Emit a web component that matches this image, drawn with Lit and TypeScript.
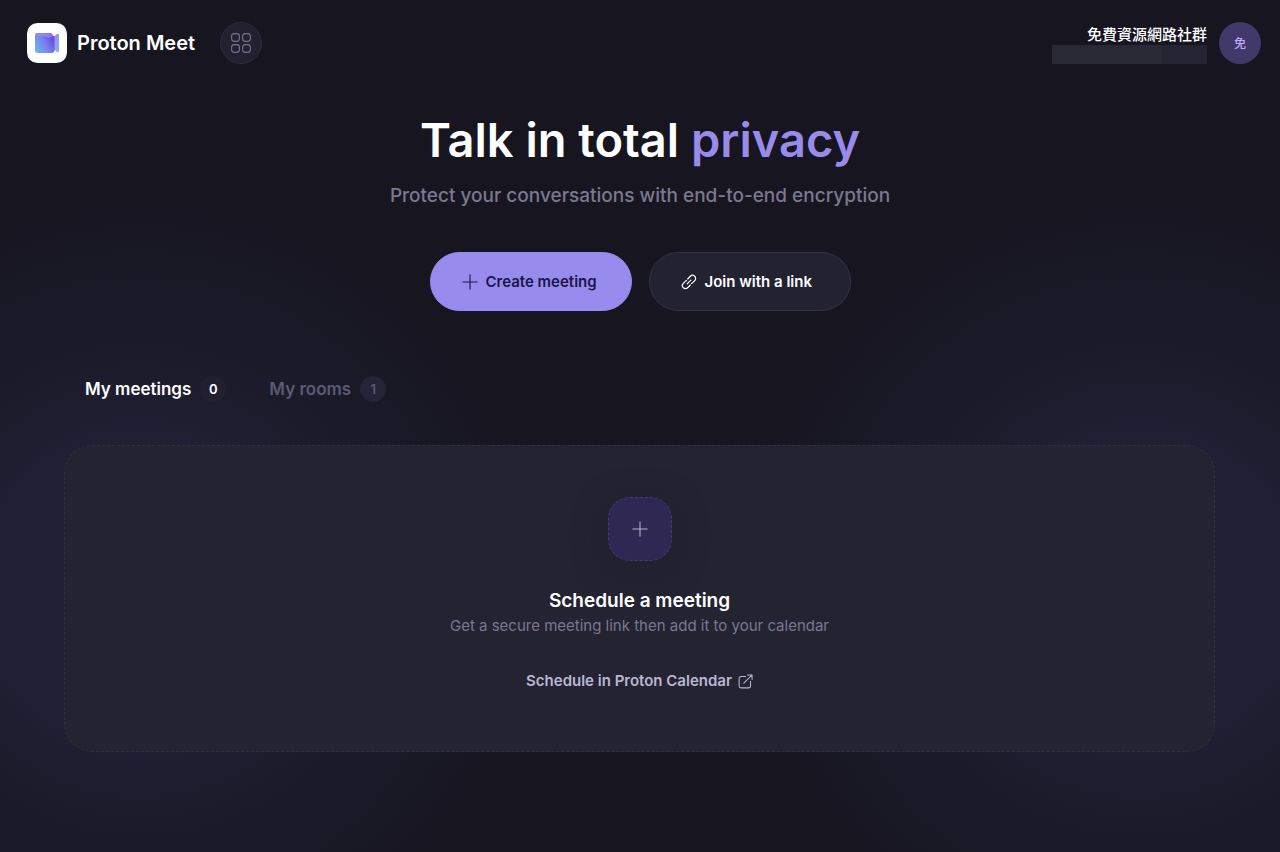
import { LitElement, html, css, svg } from "lit";
import { customElement, state } from "lit/decorators.js";

const plusIcon = svg`
  <svg class="icon" viewBox="0 0 16 16" width="16" height="16" aria-hidden="true">
    <path d="M8 .8v14.400M.8 8h14.400" fill="none" stroke="currentColor" stroke-width="1.100" stroke-linecap="round" />
  </svg>`;

const linkIcon = svg`
  <svg class="icon" viewBox="0 0 16 16" width="16" height="16" aria-hidden="true">
    <g fill="none" stroke="currentColor" stroke-width="1.200" stroke-linecap="round" transform="rotate(-45 8 8)">
      <path d="M9.200 4.900H13a3.100 3.100 0 0 1 0 6.200H9.800a3 3 0 0 1-1.200-.3" />
      <path d="M6.800 11.100H3a3.100 3.100 0 0 1 0-6.200h3.200a3 3 0 0 1 1.200.3" />
      <path d="M5.400 8h5.200" />
    </g>
  </svg>`;

const externalIcon = svg`
  <svg class="icon" viewBox="0 0 16 16" width="15" height="15" aria-hidden="true">
    <g fill="none" stroke="currentColor" stroke-width="1.100" stroke-linecap="round" stroke-linejoin="round">
      <path d="M8.200 2.600H3.400A2.200 2.200 0 0 0 1.200 4.800v7.800a2.200 2.200 0 0 0 2.200 2.200h7.800a2.200 2.200 0 0 0 2.200-2.200V7.800" />
      <path d="M10.200 1H15v4.800M15 1 6.200 9.800" />
    </g>
  </svg>`;

const appsIcon = svg`
  <svg class="icon" viewBox="0 0 20 20" width="20" height="20" aria-hidden="true">
    <g fill="none" stroke="currentColor" stroke-width="1.100">
      <rect x=".6" y=".6" width="7.800" height="7.800" rx="2.800" />
      <rect x="11.600" y=".6" width="7.800" height="7.800" rx="2.800" />
      <rect x=".6" y="11.600" width="7.800" height="7.800" rx="2.800" />
      <rect x="11.600" y="11.600" width="7.800" height="7.800" rx="2.800" />
    </g>
  </svg>`;

const logo = svg`
  <svg class="logo" viewBox="0 0 40 40" width="40" height="40" aria-hidden="true">
    <defs>
      <linearGradient id="body" x1="0" y1=".9" x2="1" y2=".3">
        <stop offset="0" stop-color="#6cb4ec" />
        <stop offset=".5" stop-color="#7a86ea" />
        <stop offset="1" stop-color="#6a45e4" />
      </linearGradient>
      <linearGradient id="lens" x1="0" y1="0" x2="0" y2="1">
        <stop offset="0" stop-color="#a08ee8" />
        <stop offset="1" stop-color="#86b4ec" />
      </linearGradient>
    </defs>
    <rect width="40" height="40" rx="10.500" fill="#fff" />
    <path d="M24 15.500 30 11q2-1 2 1.200v15.600q0 2.200-2 1.200l-6-4.500z" fill="url(#lens)" />
    <path d="M10 10h13q2.500 0 3 2.500l1.500 1.500v13q0 3-3 3H11q-3 0-3-3V12q0-2 2-2z" fill="url(#body)" />
    <path d="M8 13v-1q0-2 2-2h13q2.500 0 3 2.500v.5l-5 2-2-1.500H8z" fill="#9a93ea" opacity=".7" />
  </svg>`;

@customElement("app-root")
export class AppRoot extends LitElement {
  static styles = css`
    :host {
      display: block;
      min-height: 100vh;
      box-sizing: border-box;
      color: #fff;
      font-family: Inter, "Noto Sans CJK TC", sans-serif;
      background:
        radial-gradient(circle 400px at 11% 590px, #22233a 0, #201f33 38%, #1b1a29 65%, #16152000 100%),
        radial-gradient(circle 400px at 89% 590px, #22233a 0, #201f33 38%, #1b1a29 65%, #16152000 100%),
        #161520;
    }
    * { box-sizing: border-box; }
    button { font: inherit; color: inherit; border: 0; background: none; padding: 0; cursor: pointer; }
    h1, h2, p { margin: 0; }
    .icon, .logo { display: block; flex: none; }

    .header { display: flex; align-items: center; justify-content: space-between; padding: 22px 19px 22px 27px; }
    .start, .user, .brand { display: flex; align-items: center; }
    .start { gap: 25px; }
    .brand { gap: 10px; color: #fff; text-decoration: none; font-size: 20px; line-height: 24px; font-weight: 600; }
    .apps {
      display: grid; place-items: center; width: 42px; height: 42px; border-radius: 50%;
      background: #232130; border: 1px solid #2c2b3c; color: #77738c;
    }
    .user { gap: 12px; }
    .identity { display: flex; flex-direction: column; align-items: flex-end; padding-top: 2px; }
    .name { font-size: 15px; line-height: 20px; font-weight: 500; }
    .address { display: flex; width: 155px; height: 19px; background: #252432; }
    .address::before { content: ""; width: 70%; background: #292936; }
    .avatar {
      width: 42px; height: 42px; border-radius: 50%; background: #413968; color: #bfa9ff;
      font-family: "Noto Sans CJK TC", sans-serif; font-size: 12px; line-height: 16px; font-weight: 500;
    }

    .hero { display: flex; flex-direction: column; align-items: center; padding: 26px 24px 0; text-align: center; }
    .title { font-size: 47px; line-height: 56px; font-weight: 600; }
    .accent { color: #988be9; }
    .tagline { margin-top: 14px; font-size: 19px; line-height: 28px; font-weight: 500; color: #7b7890; }
    .actions { display: flex; flex-wrap: wrap; justify-content: center; gap: 17px; margin-top: 42px; }
    .action {
      display: flex; align-items: center; gap: 8px; min-width: 202px; height: 59px; padding: 0 31px;
      border: 1px solid #353446; border-radius: 30px; font-size: 15px; line-height: 20px; font-weight: 600;
    }
    .primary { background: #988bee; border-color: #988bee; color: #1d1646; }
    .secondary { background: #232231; }

    .content { padding: 65px 65px 24px 64px; }
    .tabs { display: flex; gap: 43px; padding-left: 21px; }
    .tab { display: flex; align-items: center; gap: 9px; font-size: 17px; line-height: 24px; font-weight: 600; color: #5c5973; }
    .count {
      display: grid; place-items: center; width: 26px; height: 26px; border-radius: 50%;
      background: #252337; font-size: 13px; line-height: 16px;
    }
    .selected { color: #fff; }
    .selected .count { background: #212031; }

    .panel {
      display: flex; flex-direction: column; align-items: center; margin-top: 43px; padding: 51px 24px 60px;
      border: 1px dashed #302f40; border-radius: 28px; background: #242332; text-align: center;
    }
    .add {
      display: grid; place-items: center; width: 64px; height: 64px; border-radius: 22px;
      border: 1px dashed #443d66; background: #2e2852; color: #b5b0c8; box-shadow: 0 8px 32px #1e1d2a80;
    }
    .heading { margin-top: 26px; font-size: 19px; line-height: 28px; font-weight: 600; }
    .hint { font-size: 15px; line-height: 22px; color: #7b7791; }
    .calendar {
      display: flex; align-items: center; gap: 6px; margin-top: 34px; font-size: 15px; line-height: 20px;
      font-weight: 600; color: #bab6d2; text-decoration: none;
    }
  `;

  @state() private tab = 0;

  private tabs = [
    { label: "My meetings", count: 0 },
    { label: "My rooms", count: 1 },
  ];

  render() {
    return html`
      <header class="header">
        <div class="start">
          <a class="brand" href="#">${logo}<span>Proton Meet</span></a>
          <button class="apps" aria-label="Proton apps">${appsIcon}</button>
        </div>
        <div class="user">
          <div class="identity">
            <span class="name">免費資源網路社群</span>
            <span class="address"></span>
          </div>
          <button class="avatar">免</button>
        </div>
      </header>
      <main>
        <section class="hero">
          <h1 class="title">Talk in total <span class="accent">privacy</span></h1>
          <p class="tagline">Protect your conversations with end-to-end encryption</p>
          <div class="actions">
            <button class="action primary">${plusIcon}<span>Create meeting</span></button>
            <button class="action secondary">${linkIcon}<span>Join with a link</span></button>
          </div>
        </section>
        <section class="content">
          <div class="tabs" role="tablist">
            ${this.tabs.map(
              (t, i) => html`
                <button
                  class="tab ${i === this.tab ? "selected" : ""}"
                  role="tab"
                  aria-selected=${i === this.tab ? "true" : "false"}
                  @click=${() => (this.tab = i)}
                >
                  <span>${t.label}</span><span class="count">${t.count}</span>
                </button>
              `
            )}
          </div>
          <div class="panel">
            <button class="add" aria-label="Schedule a meeting">${plusIcon}</button>
            <h2 class="heading">Schedule a meeting</h2>
            <p class="hint">Get a secure meeting link then add it to your calendar</p>
            <a class="calendar" href="#"><span>Schedule in Proton Calendar</span>${externalIcon}</a>
          </div>
        </section>
      </main>
    `;
  }
}
